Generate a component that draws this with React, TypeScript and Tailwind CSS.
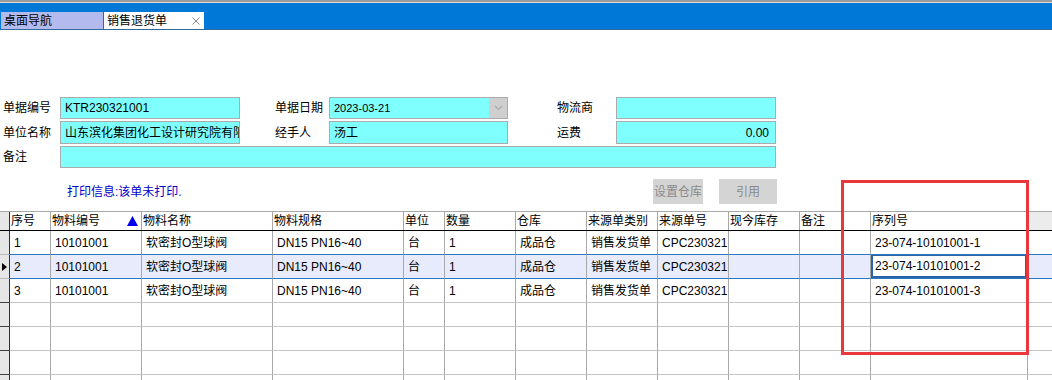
import React from 'react';

const FONT = '"Liberation Sans", "Noto Sans CJK SC", sans-serif';

interface Column {
  key: string;
  title: string;
  width: string;
}

const columns: Column[] = [
  { key: 'no', title: '序号', width: 'w-[41px]' },
  { key: 'code', title: '物料编号', width: 'w-[91px]' },
  { key: 'name', title: '物料名称', width: 'w-[131px]' },
  { key: 'spec', title: '物料规格', width: 'w-[131px]' },
  { key: 'unit', title: '单位', width: 'w-[41px]' },
  { key: 'qty', title: '数量', width: 'w-[71px]' },
  { key: 'wh', title: '仓库', width: 'w-[71px]' },
  { key: 'srcType', title: '来源单类别', width: 'w-[71px]' },
  { key: 'srcNo', title: '来源单号', width: 'w-[71px]' },
  { key: 'stock', title: '现今库存', width: 'w-[71px]' },
  { key: 'remark', title: '备注', width: 'w-[71px]' },
  { key: 'serial', title: '序列号', width: 'w-[157px]' },
];

type Row = Record<string, string>;

const rows: Row[] = [1, 2, 3].map((n) => ({
  no: String(n),
  code: '10101001',
  name: '软密封O型球阀',
  spec: 'DN15 PN16~40',
  unit: '台',
  qty: '1',
  wh: '成品仓',
  srcType: '销售发货单',
  srcNo: 'CPC230321',
  stock: '',
  remark: '',
  serial: `23-074-10101001-${n}`,
}));

const Field: React.FC<{ className?: string; children?: React.ReactNode }> = ({ className = '', children }) => (
  <div
    className={`h-full bg-[#80ffff] border border-[#ababab] flex items-center px-[4px] overflow-hidden whitespace-nowrap text-[12px] text-black ${className}`}
  >
    {children}
  </div>
);

const Label: React.FC<{ className: string; children: React.ReactNode }> = ({ className, children }) => (
  <div className={`h-full flex items-center text-[12px] text-black ${className}`}>{children}</div>
);

const App: React.FC = () => {
  const bodyRows: (Row | null)[] = [...rows, null, null, null, null];

  return (
    <div className="w-[1052px] h-[380px] overflow-hidden bg-white relative" style={{ fontFamily: FONT }}>
      {/* Title strip with tabs */}
      <div className="h-[2px] bg-[#9c9c9c]" />
      <div className="h-[1px] bg-[#dcdcdc]" />
      <div className="h-[27px] bg-[#0078d7] border-b border-[#2f6a9c] flex items-end pl-[1px]">
        <div className="h-[17px] w-[102px] bg-[#b3bbee] flex items-center pl-[3px] text-[12px] text-black">
          桌面导航
        </div>
        <div className="h-[17px] w-[100px] ml-[1px] bg-white flex items-center pl-[3px] pr-[4px] text-[12px] text-black">
          <span className="flex-1">销售退货单</span>
          <svg width="8" height="8" viewBox="0 0 8 8">
            <path d="M0.5 0.5 L7.5 7.5 M7.5 0.5 L0.5 7.5" stroke="#8a8a8a" strokeWidth="1" />
          </svg>
        </div>
      </div>

      {/* Header form */}
      <div className="mt-[67px] flex flex-col gap-[2px]">
        <div className="flex h-[22px]">
          <Label className="w-[60px] pl-[3px]">单据编号</Label>
          <Field className="w-[180px]">KTR230321001</Field>
          <Label className="w-[89px] pl-[35px]">单据日期</Label>
          <div className="w-[179px] h-full bg-[#80ffff] border border-[#ababab] flex">
            <div className="flex-1 flex items-center pl-[4px] text-[11px] text-black">2023-03-21</div>
            <div className="w-[18px] h-full bg-[#cfcfcf] flex items-center justify-center">
              <svg width="9" height="6" viewBox="0 0 9 6">
                <path d="M1 1 L4.5 4.5 L8 1" fill="none" stroke="#a8a8a8" strokeWidth="1.2" />
              </svg>
            </div>
          </div>
          <Label className="w-[108px] pl-[49px]">物流商</Label>
          <Field className="w-[160px]" />
        </div>
        <div className="flex h-[23px]">
          <Label className="w-[60px] pl-[3px]">单位名称</Label>
          <Field className="w-[180px]">山东滨化集团化工设计研究院有限公司</Field>
          <Label className="w-[89px] pl-[35px]">经手人</Label>
          <Field className="w-[179px]">汤工</Field>
          <Label className="w-[108px] pl-[49px]">运费</Label>
          <Field className="w-[160px] justify-end pr-[6px]">0.00</Field>
        </div>
        <div className="flex h-[22px]">
          <Label className="w-[60px] pl-[3px]">备注</Label>
          <Field className="w-[716px]" />
        </div>
      </div>

      {/* Print info + buttons */}
      <div className="mt-[11px] flex h-[25px] items-center">
        <div className="w-[653px] pl-[67px] text-[12px] text-[#0000c8]">打印信息:该单未打印.</div>
        <div className="w-[50px] h-full bg-[#d4d4d4] flex items-center justify-center text-[12px] text-[#8a8a8a]">
          设置仓库
        </div>
        <div className="w-[58px] h-full ml-[16px] bg-[#d4d4d4] flex items-center justify-center text-[12px] text-[#8a8a8a]">
          引用
        </div>
      </div>

      {/* Grid */}
      <div className="mt-[7px]">
        <div className="flex h-[20px] border-t border-[#a8a8a8] border-b border-b-black">
          <div className="w-[10px] h-full bg-[#e6e6e6] border-r border-[#303030]" />
          {columns.map((c) => (
            <div
              key={c.key}
              className={`${c.width} h-full border-r border-[#a8a8a8] flex items-center pl-[1px] text-[12px] text-black whitespace-nowrap`}
            >
              <span className="flex-1">{c.title}</span>
              {c.key === 'code' && (
                <svg width="11" height="10" viewBox="0 0 11 10" className="mr-[3px]">
                  <path d="M5.5 0 L11 10 L0 10 Z" fill="#0000ee" />
                </svg>
              )}
            </div>
          ))}
          <div className="flex-1 h-full bg-[#ececec]" />
        </div>

        {bodyRows.map((row, i) => {
          const selected = i === 1;
          const blueBottom = i === 0 || i === 1;
          const lineColor = blueBottom ? 'border-b-[#2a78c2]' : 'border-b-[#c4c4c4]';
          return (
            <div key={i} className={`flex h-[24px] ${selected ? 'bg-[#e7ebfb]' : 'bg-white'}`}>
              <div
                className={`w-[10px] h-full bg-[#e6e6e6] border-r border-r-[#303030] border-b ${
                  i < 2 ? 'border-b-[#bdbdbd]' : 'border-b-[#404040]'
                } flex items-center justify-center`}
              >
                {selected && (
                  <svg width="5" height="8" viewBox="0 0 5 8">
                    <path d="M0 0 L5 4 L0 8 Z" fill="#000" />
                  </svg>
                )}
              </div>
              {columns.map((c) => {
                const current = selected && c.key === 'serial';
                return (
                  <div
                    key={c.key}
                    className={`${c.width} h-full border-r border-r-[#a8a8a8] border-b ${lineColor} flex items-center text-[12px] text-black whitespace-nowrap overflow-hidden`}
                  >
                    {current ? (
                      <div className="w-full h-[24px] -mt-[1px] border-2 border-[#2a63a8] bg-white flex items-center pl-[2px]">
                        {row?.[c.key]}
                      </div>
                    ) : (
                      <span className="pl-[4px]">{row ? row[c.key] : ''}</span>
                    )}
                  </div>
                );
              })}
              <div className={`flex-1 h-full border-b ${lineColor}`} />
            </div>
          );
        })}
      </div>

      {/* Red annotation box */}
      <div className="absolute left-[841px] top-[180px] w-[188px] h-[175px] border-[3px] border-[#e8383d]" />
    </div>
  );
};

export default App;
